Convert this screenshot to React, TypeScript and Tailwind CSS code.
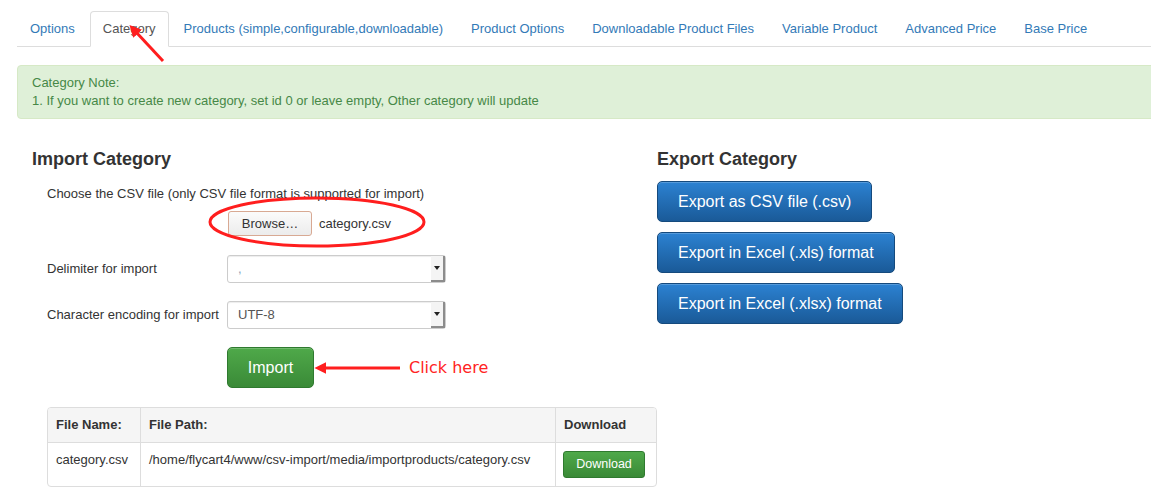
import React from "react";

const tabs = [
  "Options",
  "Category",
  "Products (simple,configurable,downloadable)",
  "Product Options",
  "Downloadable Product Files",
  "Variable Product",
  "Advanced Price",
  "Base Price",
];

const SelectBox = ({ value, muted }: { value: string; muted?: boolean }) => (
  <div className="relative flex h-[28px] w-[219px] items-center rounded-[3px] border border-[#ccc] bg-white pl-[10px] shadow-[inset_0_1px_1px_rgba(0,0,0,0.075)]">
    <span className={muted ? "text-[#8aa0b8]" : "text-[#555]"}>{value}</span>
    <div className="absolute right-0 top-0 flex h-[26px] w-[14px] items-center justify-center border-b-2 border-r-2 border-[#8c8c8c] bg-[#f4f4f4]">
      <div className="h-0 w-0 border-x-[3px] border-t-[4px] border-x-transparent border-t-[#222]" />
    </div>
  </div>
);

const ExportButton = ({ label }: { label: string }) => (
  <button className="flex h-[41px] items-center self-start rounded-[5px] border border-[#154a7d] bg-gradient-to-b from-[#2c82d2] to-[#1a5a98] px-5 text-[16px] text-white shadow-[inset_0_1px_0_rgba(255,255,255,0.2)]">
    {label}
  </button>
);

export default function App() {
  return (
    <div className="relative h-[489px] w-[1151px] overflow-hidden bg-white font-['Liberation_Sans',Arial,sans-serif] text-[13px] text-[#333]">
      {/* Tabs */}
      <div className="pl-[17px] pt-[11px]">
        <ul className="flex border-b border-[#ddd]">
          {tabs.map((t) => {
            const active = t === "Category";
            return (
              <li key={t} className="-mb-px mr-[2px]">
                <a
                  className={`block rounded-t-[4px] border px-3 py-[7px] leading-5 ${
                    active
                      ? "border-[#ddd] border-b-white bg-white text-[#555]"
                      : "border-transparent text-[#337ab7]"
                  }`}
                >
                  {t}
                </a>
              </li>
            );
          })}
        </ul>
      </div>

      {/* Note */}
      <div className="ml-[17px] mt-[18px] w-[1150px] rounded-[4px] border border-[#d6e9c6] bg-[#dff0d8] px-[14px] py-2 leading-[18px] text-[#468847]">
        <div>Category Note:</div>
        <div>1. If you want to create new category, set id 0 or leave empty, Other category will update</div>
      </div>

      {/* Main */}
      <div className="mt-[30px] flex">
        {/* Import */}
        <div className="ml-[32px] w-[625px]">
          <h2 className="text-[18px] font-bold leading-5 text-[#333]">Import Category</h2>
          <div className="pl-[15px]">
            <p className="mt-[16px] leading-[18px]">
              Choose the CSV file (only CSV file format is supported for import)
            </p>
            <div className="ml-[181px] mt-[8px] flex items-center">
              <button className="h-[25px] w-[84px] rounded-[3px] border border-[#d8a993] bg-gradient-to-b from-[#fbfbfb] to-[#ececec] text-[13px] text-[#333]">
                Browse…
              </button>
              <span className="ml-[7px]">category.csv</span>
            </div>
            <div className="mt-[19px] flex items-center">
              <label className="w-[180px]">Delimiter for import</label>
              <SelectBox value="," muted />
            </div>
            <div className="mt-[18px] flex items-center">
              <label className="w-[180px]">Character encoding for import</label>
              <SelectBox value="UTF-8" />
            </div>
            <div className="ml-[180px] mt-[18px] flex items-center">
              <button className="h-[41px] w-[87px] rounded-[5px] border border-[#2f7a2f] bg-gradient-to-b from-[#4fa94a] to-[#3a8a37] text-[16px] text-white shadow-[inset_0_1px_0_rgba(255,255,255,0.2)]">
                Import
              </button>
              <span className="ml-[95px] font-['DejaVu_Sans',sans-serif] text-[16px] text-[#ff2424]">
                Click here
              </span>
            </div>

            {/* Files table */}
            <div className="mt-[19px] w-[610px] overflow-hidden rounded-[4px] border border-[#ddd]">
              <div className="flex h-[34px] bg-[#f5f5f5] font-bold">
                <div className="flex w-[93px] items-center border-r border-[#ddd] pl-[8px]">File Name:</div>
                <div className="flex w-[415px] items-center border-r border-[#ddd] pl-[8px]">File Path:</div>
                <div className="flex flex-1 items-center pl-[8px]">Download</div>
              </div>
              <div className="flex h-[44px] border-t border-[#ddd]">
                <div className="w-[93px] border-r border-[#ddd] pl-[8px] pt-[7px] leading-5">category.csv</div>
                <div className="w-[415px] border-r border-[#ddd] pl-[8px] pt-[7px] leading-5">
                  /home/flycart4/www/csv-import/media/importproducts/category.csv
                </div>
                <div className="flex-1 pl-[7px] pt-[8px]">
                  <button className="h-[27px] w-[82px] rounded-[3px] border border-[#2f7a2f] bg-gradient-to-b from-[#4fa94a] to-[#3a8a37] text-[12.5px] text-white">
                    Download
                  </button>
                </div>
              </div>
            </div>
          </div>
        </div>

        {/* Export */}
        <div className="flex flex-col">
          <h2 className="text-[18px] font-bold leading-5 text-[#333]">Export Category</h2>
          <div className="mt-[12px] flex flex-col gap-[10px]">
            <ExportButton label="Export as CSV file (.csv)" />
            <ExportButton label="Export in Excel (.xls) format" />
            <ExportButton label="Export in Excel (.xlsx) format" />
          </div>
        </div>
      </div>

      {/* Annotations */}
      <svg className="pointer-events-none absolute left-0 top-0" width="1151" height="489">
        <defs>
          <marker id="ah" viewBox="0 0 10 10" refX="2" refY="5" markerWidth="4" markerHeight="4" orient="auto-start-reverse">
            <path d="M0,0 L10,5 L0,10 z" fill="#ff1e1e" />
          </marker>
        </defs>
        <line x1="163" y1="61" x2="136" y2="32" stroke="#ff1e1e" strokeWidth="3" markerEnd="url(#ah)" />
        <line x1="400" y1="368" x2="324" y2="368" stroke="#ff1e1e" strokeWidth="3" markerEnd="url(#ah)" />
        <ellipse cx="317" cy="222" rx="107" ry="24" fill="none" stroke="#ff1e1e" strokeWidth="3" />
      </svg>
    </div>
  );
}
